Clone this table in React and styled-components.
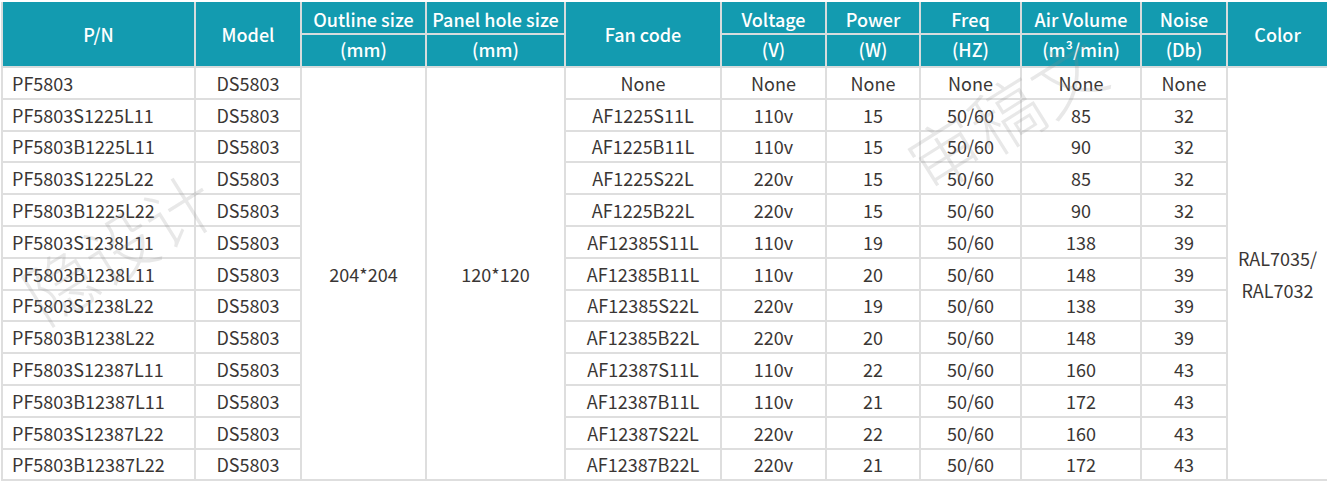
import styled, { createGlobalStyle } from "styled-components";

const GlobalStyle = createGlobalStyle`
  html, body {
    margin: 0;
    padding: 0;
    background: #fff;
  }
  body {
    font-family: "Noto Sans CJK SC", "Noto Sans", sans-serif;
  }
`;

const Page = styled.div`
  position: relative;
  width: 1327px;
  height: 483px;
  padding: 2px 0 0 1px;
  box-sizing: border-box;
  overflow: hidden;
`;

const Table = styled.table`
  border-collapse: collapse;
  table-layout: fixed;
  width: 1326px;
  font-size: 18px;
  color: #3a3634;
`;

const Th = styled.th`
  background: #139bb0;
  color: #fff;
  font-weight: 500;
  height: ${(p) => (p.$sub || p.$top ? 28 : 31)}px;
  padding: ${(p) => (p.$sub ? "0 0 3px" : p.$top ? "3px 0 0" : "0")};
  line-height: 1;
  text-align: center;
  border: 2px solid #d7dcdd;
  border-top: none;
  white-space: nowrap;
`;

const Td = styled.td`
  height: 29.8px;
  padding: 0;
  padding-left: ${(p) => (p.$left ? "9px" : "0")};
  text-align: ${(p) => (p.$left ? "left" : "center")};
  line-height: 1;
  border: 2px solid #dedede;
  white-space: nowrap;
`;

const Multi = styled.span`
  display: block;
  line-height: 32px;
`;

const Mark = styled.div`
  position: absolute;
  left: ${(p) => p.$x}px;
  top: ${(p) => p.$y}px;
  font-size: ${(p) => p.$size}px;
  color: rgba(140, 140, 140, 0.2);
  font-family: "Noto Sans CJK SC", serif;
  font-weight: 300;
  transform: rotate(-32deg);
  transform-origin: left top;
  pointer-events: none;
  white-space: nowrap;
`;

const widths = [193, 106, 125, 139, 156, 105, 94, 101, 120, 86, 101];

const rows = [
  ["PF5803", "None", "None", "None", "None", "None", "None"],
  ["PF5803S1225L11", "AF1225S11L", "110v", "15", "50/60", "85", "32"],
  ["PF5803B1225L11", "AF1225B11L", "110v", "15", "50/60", "90", "32"],
  ["PF5803S1225L22", "AF1225S22L", "220v", "15", "50/60", "85", "32"],
  ["PF5803B1225L22", "AF1225B22L", "220v", "15", "50/60", "90", "32"],
  ["PF5803S1238L11", "AF12385S11L", "110v", "19", "50/60", "138", "39"],
  ["PF5803B1238L11", "AF12385B11L", "110v", "20", "50/60", "148", "39"],
  ["PF5803S1238L22", "AF12385S22L", "220v", "19", "50/60", "138", "39"],
  ["PF5803B1238L22", "AF12385B22L", "220v", "20", "50/60", "148", "39"],
  ["PF5803S12387L11", "AF12387S11L", "110v", "22", "50/60", "160", "43"],
  ["PF5803B12387L11", "AF12387B11L", "110v", "21", "50/60", "172", "43"],
  ["PF5803S12387L22", "AF12387S22L", "220v", "22", "50/60", "160", "43"],
  ["PF5803B12387L22", "AF12387B22L", "220v", "21", "50/60", "172", "43"],
];

export default function App() {
  return (
    <>
      <GlobalStyle />
      <Page>
        <Table>
          <colgroup>
            {widths.map((w, i) => (
              <col key={i} style={{ width: w }} />
            ))}
          </colgroup>
          <thead>
            <tr>
              <Th rowSpan={2}>P/N</Th>
              <Th rowSpan={2}>Model</Th>
              <Th $top>Outline size</Th>
              <Th $top>Panel hole size</Th>
              <Th rowSpan={2}>Fan code</Th>
              <Th $top>Voltage</Th>
              <Th $top>Power</Th>
              <Th $top>Freq</Th>
              <Th $top>Air Volume</Th>
              <Th $top>Noise</Th>
              <Th rowSpan={2}>Color</Th>
            </tr>
            <tr>
              <Th $sub>(mm)</Th>
              <Th $sub>(mm)</Th>
              <Th $sub>(V)</Th>
              <Th $sub>(W)</Th>
              <Th $sub>(HZ)</Th>
              <Th $sub>(m³/min)</Th>
              <Th $sub>(Db)</Th>
            </tr>
          </thead>
          <tbody>
            {rows.map((r, i) => (
              <tr key={r[0]}>
                <Td $left>{r[0]}</Td>
                <Td>DS5803</Td>
                {i === 0 && <Td rowSpan={13}>204*204</Td>}
                {i === 0 && <Td rowSpan={13}>120*120</Td>}
                {r.slice(1).map((c, j) => (
                  <Td key={j}>{c}</Td>
                ))}
                {i === 0 && (
                  <Td rowSpan={13}>
                    <Multi>RAL7035/</Multi>
                    <Multi>RAL7032</Multi>
                  </Td>
                )}
              </tr>
            ))}
          </tbody>
        </Table>
        <Mark $x={2} $y={258} $size={70}>隐设计</Mark>
        <Mark $x={885} $y={125} $size={72}>审稿文</Mark>
      </Page>
    </>
  );
}
